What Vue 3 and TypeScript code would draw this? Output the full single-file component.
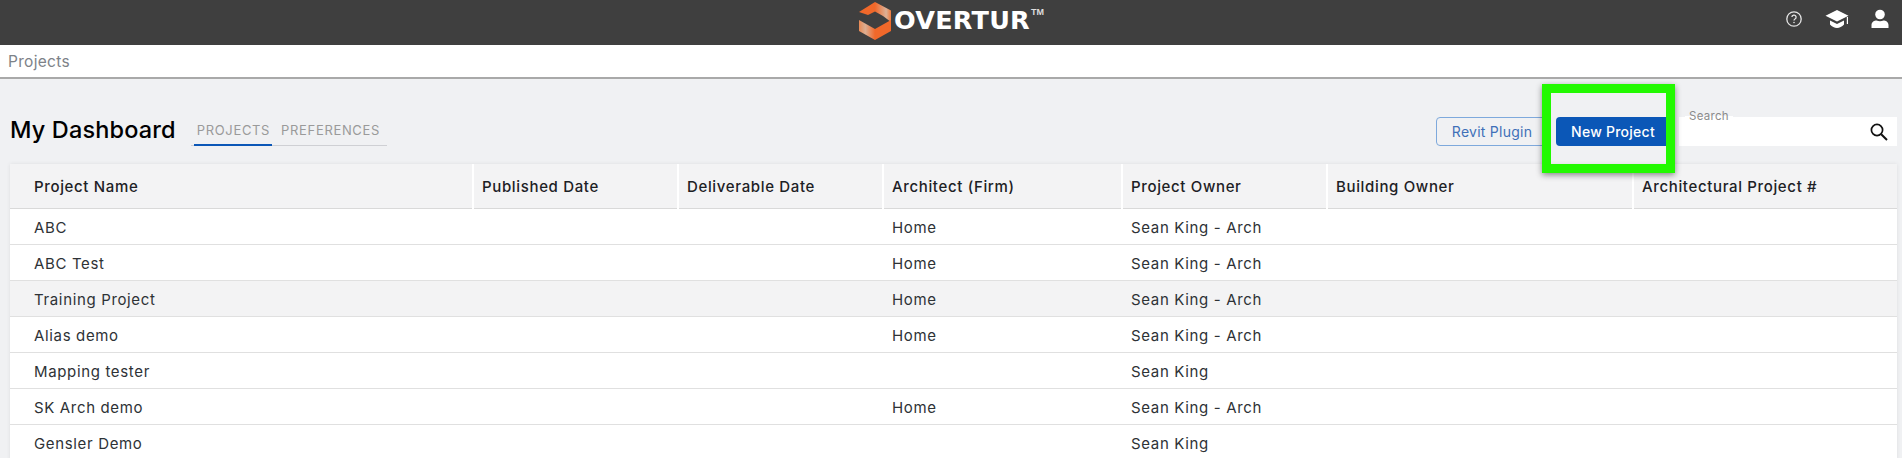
<script setup lang="ts">
const columns: string[] = ['Project Name', 'Published Date', 'Deliverable Date', 'Architect (Firm)', 'Project Owner', 'Building Owner', 'Architectural Project #']
const rows: { name: string; firm: string; owner: string; hover?: boolean }[] = [
  { name: 'ABC', firm: 'Home', owner: 'Sean King - Arch' },
  { name: 'ABC Test', firm: 'Home', owner: 'Sean King - Arch' },
  { name: 'Training Project', firm: 'Home', owner: 'Sean King - Arch', hover: true },
  { name: 'Alias demo', firm: 'Home', owner: 'Sean King - Arch' },
  { name: 'Mapping tester', firm: '', owner: 'Sean King' },
  { name: 'SK Arch demo', firm: 'Home', owner: 'Sean King - Arch' },
  { name: 'Gensler Demo', firm: '', owner: 'Sean King' }
]
</script>

<template>
  <div class="page">
    <header class="topbar">
      <div class="brand">
        <svg class="logo" viewBox="0 0 32 39" width="32" height="39">
          <defs>
            <linearGradient id="fadeA" x1="0" y1="0" x2="32" y2="0" gradientUnits="userSpaceOnUse">
              <stop offset="0.5" stop-color="#f0682a" />
              <stop offset="0.85" stop-color="#dcb197" />
              <stop offset="1" stop-color="#ee7a3e" />
            </linearGradient>
            <linearGradient id="fadeB" x1="0" y1="0" x2="32" y2="0" gradientUnits="userSpaceOnUse">
              <stop offset="0" stop-color="#e98a55" />
              <stop offset="0.2" stop-color="#dcae92" />
              <stop offset="0.5" stop-color="#f0682a" />
            </linearGradient>
          </defs>
          <path d="M0 11 L16 1 L32 9.500 L32 21 L24 15 L16 10.500 L9 14 Z" fill="url(#fadeA)" />
          <path d="M0 19 L16 28 L32 19 L32 30 L16 39 L0 30 Z" fill="url(#fadeB)" />
        </svg>
        <span class="wordmark">OVERTUR</span><span class="tm">TM</span>
      </div>
      <div class="top-icons">
        <svg width="20" height="20" viewBox="0 0 20 20" class="ic-help">
          <circle cx="10" cy="10" r="7.200" fill="none" stroke="#e4e4e4" stroke-width="1.300" />
          <path d="M7.900 8.100 A2.100 2.100 0 1 1 11 10 C10.300 10.400 10 10.800 10 11.600" fill="none" stroke="#e4e4e4" stroke-width="1.300" />
          <circle cx="10" cy="13.500" r="0.800" fill="#e4e4e4" />
        </svg>
        <svg width="24" height="20" viewBox="0 0 24 20">
          <path d="M12 1 L23.500 6.800 L12 12.600 L0.500 6.800 Z" fill="#fff" />
          <path d="M5 11.500 L12 15 L19 11.500 L19 15.500 C17 17.800 14.500 19 12 19 C9.500 19 7 17.800 5 15.500 Z" fill="#fff" />
          <rect x="21.800" y="8" width="1.200" height="7" fill="#fff" />
        </svg>
        <svg width="20" height="20" viewBox="0 0 20 20">
          <circle cx="10" cy="5.500" r="4.800" fill="#fff" />
          <path d="M1.500 19 L1.500 16 C1.500 12.800 4.500 11.500 6.500 11.500 C8.700 12.500 11.300 12.500 13.500 11.500 C15.500 11.500 18.500 12.800 18.500 16 L18.500 19 Z" fill="#fff" />
        </svg>
      </div>
    </header>

    <nav class="crumb">Projects</nav>

    <main class="content">
      <section class="toolbar">
        <div class="heading">
          <h1>My Dashboard</h1>
          <div class="tabs">
            <span class="tab active">PROJECTS</span>
            <span class="tab">PREFERENCES</span>
          </div>
        </div>
        <div class="actions">
          <button class="btn outline">Revit Plugin</button>
          <button class="btn solid">New Project</button>
          <div class="search">
            <span class="search-label">Search</span>
            <svg width="20" height="20" viewBox="0 0 20 20">
              <circle cx="8" cy="8" r="5.600" fill="none" stroke="#111" stroke-width="1.700" />
              <path d="M12.200 12.200 L18 18" stroke="#111" stroke-width="2" />
            </svg>
          </div>
        </div>
        <div class="highlight"></div>
      </section>

      <section class="table">
        <div class="row head">
          <div v-for="c in columns" :key="c" class="cell">{{ c }}</div>
        </div>
        <div v-for="r in rows" :key="r.name" class="row" :class="{ hover: r.hover }">
          <div class="cell">{{ r.name }}</div>
          <div class="cell"></div>
          <div class="cell"></div>
          <div class="cell">{{ r.firm }}</div>
          <div class="cell">{{ r.owner }}</div>
          <div class="cell"></div>
          <div class="cell"></div>
        </div>
      </section>
    </main>
  </div>
</template>

<style>
html, body { margin: 0; height: 458px; overflow: hidden; background: #f0f1f3; }
</style>

<style scoped>
.page {
  width: 1902px;
  height: 458px;
  overflow: hidden;
  font-family: Inter, "Open Sans", "Liberation Sans", sans-serif;
  background: #f0f1f3;
}
.topbar {
  height: 45px;
  background: #3f3f3f;
  display: flex;
  align-items: center;
  justify-content: center;
  position: relative;
}
.brand {
  display: flex;
  align-items: flex-start;
  margin-left: 1px;
  height: 45px;
  padding-top: 1px;
  box-sizing: border-box;
}
.wordmark {
  font-family: "DejaVu Sans", sans-serif;
  font-weight: 700;
  font-size: 25.500px;
  letter-spacing: 0.200px;
  color: #fff;
  line-height: 38px;
  margin-left: 3px;
}
.tm {
  font-family: "Liberation Sans", sans-serif;
  font-weight: 700;
  font-size: 9px;
  color: #ddd;
  line-height: 22px;
  margin-left: 1px;
}
.logo { display: block; }
.top-icons {
  position: absolute;
  right: 12px;
  top: 9px;
  display: flex;
  align-items: center;
  gap: 21px;
}
.top-icons svg { display: block; }
.crumb {
  height: 32px;
  line-height: 34px;
  background: #fff;
  padding-left: 8px;
  font-size: 15.500px;
  letter-spacing: 0.300px;
  color: #7d8288;
  border-bottom: 2px solid #a9a9a9;
}
.content { padding: 0 5px 0 10px; }
.toolbar {
  height: 85px;
  position: relative;
  display: flex;
  justify-content: space-between;
}
.heading {
  display: flex;
  align-items: flex-start;
  padding-top: 36px;
}
h1 {
  margin: 0;
  font-size: 23.500px;
  line-height: 30px;
  font-weight: 500;
  letter-spacing: 0.150px;
  color: #000;
}
.tabs {
  margin-left: 15px;
  margin-top: 5px;
  display: flex;
  height: 25px;
  border-bottom: 1px solid #cfd0d4;
  padding: 0 4px 0 3px;
  gap: 6px;
}
.tab {
  font-size: 13px;
  line-height: 20px;
  letter-spacing: 0.660px;
  color: #9a9a9a;
  padding: 0 3px;
  height: 24px;
  box-sizing: border-box;
}
.tab.active {
  border-bottom: 2px solid #0b57b7;
  height: 26px;
  padding-right: 2px;
}
.actions {
  display: flex;
  align-items: flex-start;
  padding-top: 38px;
}
.btn {
  height: 29px;
  box-sizing: border-box;
  border-radius: 4px;
  font-family: inherit;
  font-size: 14px;
  letter-spacing: 0.250px;
  padding: 0;
}
.outline {
  width: 112px;
  margin-right: 8px;
  background: transparent;
  border: 1px solid #7ea9dc;
  color: #3f70b8;
}
.solid {
  width: 114px;
  margin-right: 9px;
  background: #0b57b7;
  border: none;
  color: #fff;
  font-weight: 500;
}
.search {
  width: 218px;
  height: 29px;
  background: #fff;
  position: relative;
  display: flex;
  align-items: center;
  justify-content: flex-end;
  padding-right: 8px;
  box-sizing: border-box;
}
.search-label {
  position: absolute;
  left: 6px;
  top: -8px;
  padding: 0 4px;
  font-size: 11.500px;
  line-height: 14px;
  letter-spacing: 0.300px;
  color: #8b8b8b;
  background: linear-gradient(#f0f1f3 50%, #fff 50%);
}
.highlight {
  position: absolute;
  left: 1532px;
  top: 5px;
  width: 133px;
  height: 89px;
  box-sizing: border-box;
  border: 9px solid #22f900;
  box-shadow: 0 2px 6px rgba(0, 0, 0, 0.45);
}
.table {
  background: #fff;
  box-shadow: 0 0 4px rgba(0, 0, 0, 0.08);
}
.row {
  display: grid;
  grid-template-columns: 464px 205px 205px 239px 205px 306px 1fr;
  height: 36px;
  box-sizing: border-box;
  border-bottom: 1px solid #e0e0e0;
  font-size: 15px;
  letter-spacing: 0.650px;
  color: #2e3236;
}
.row.hover { background: #f3f3f4; }
.cell {
  line-height: 37px;
  padding-left: 8px;
  white-space: nowrap;
}
.cell:first-child { padding-left: 24px; }
.head {
  height: 45px;
  background: #f3f3f4;
  border-bottom: 1px solid #d9d9d9;
  color: #1d2125;
  font-weight: 500;
}
.head .cell {
  line-height: 46px;
  border-right: 2px solid #fff;
}
.head .cell:last-child { border-right: none; }
</style>
